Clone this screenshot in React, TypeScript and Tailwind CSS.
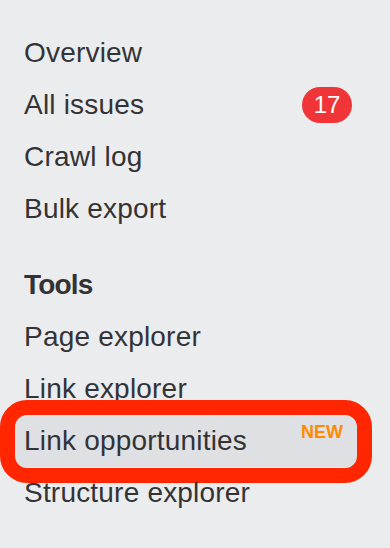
import React from 'react';

type NavItem = {
  label: string;
  badge?: string;
  isNew?: boolean;
  highlighted?: boolean;
};

const reportItems: NavItem[] = [
  { label: 'Overview' },
  { label: 'All issues', badge: '17' },
  { label: 'Crawl log' },
  { label: 'Bulk export' },
];

const toolItems: NavItem[] = [
  { label: 'Page explorer' },
  { label: 'Link explorer' },
  { label: 'Link opportunities', isNew: true, highlighted: true },
  { label: 'Structure explorer' },
];

export default function App() {
  return (
    <div
      className="w-[390px] h-[548px] bg-[#ebecee] text-[#333336] overflow-hidden"
      style={{ fontFamily: '"Liberation Sans", Arial, sans-serif' }}
    >
      <nav className="pt-[27px] pl-[14px] pr-[33px] flex flex-col">
        {reportItems.map((item) => (
          <NavRow key={item.label} item={item} />
        ))}

        {/* Tools section */}
        <div className="mt-[24px] h-[52px] pl-[10px] flex items-center text-[28px] font-bold leading-[52px] tracking-[-0.8px]">
          Tools
        </div>
        {toolItems.map((item) => (
          <NavRow key={item.label} item={item} />
        ))}
      </nav>
    </div>
  );
}

function NavRow({ item }: { item: NavItem }) {
  return (
    <div
      className={`relative h-[52px] pl-[10px] flex justify-between rounded-[12px] ${
        item.highlighted ? 'bg-[#dfe0e3] items-start' : 'items-center'
      }`}
    >
      <span className="text-[28px] leading-[52px] tracking-[0.2px] whitespace-nowrap">{item.label}</span>

      {item.badge && (
        <span className="mr-[5px] h-[36px] w-[50px] rounded-full bg-[#f03538] text-white text-[24px] leading-[36px] text-center">
          {item.badge}
        </span>
      )}

      {item.isNew && (
        <span className="mt-[8px] mr-[14px] text-[18px] leading-[18px] font-bold text-[#ff8a00]">NEW</span>
      )}

      {/* red annotation frame */}
      {item.highlighted && (
        <div className="absolute -left-[14px] -right-[15px] -top-[15px] -bottom-[16px] border-[15px] border-[#ff2600] rounded-[27px] pointer-events-none" />
      )}
    </div>
  );
}
